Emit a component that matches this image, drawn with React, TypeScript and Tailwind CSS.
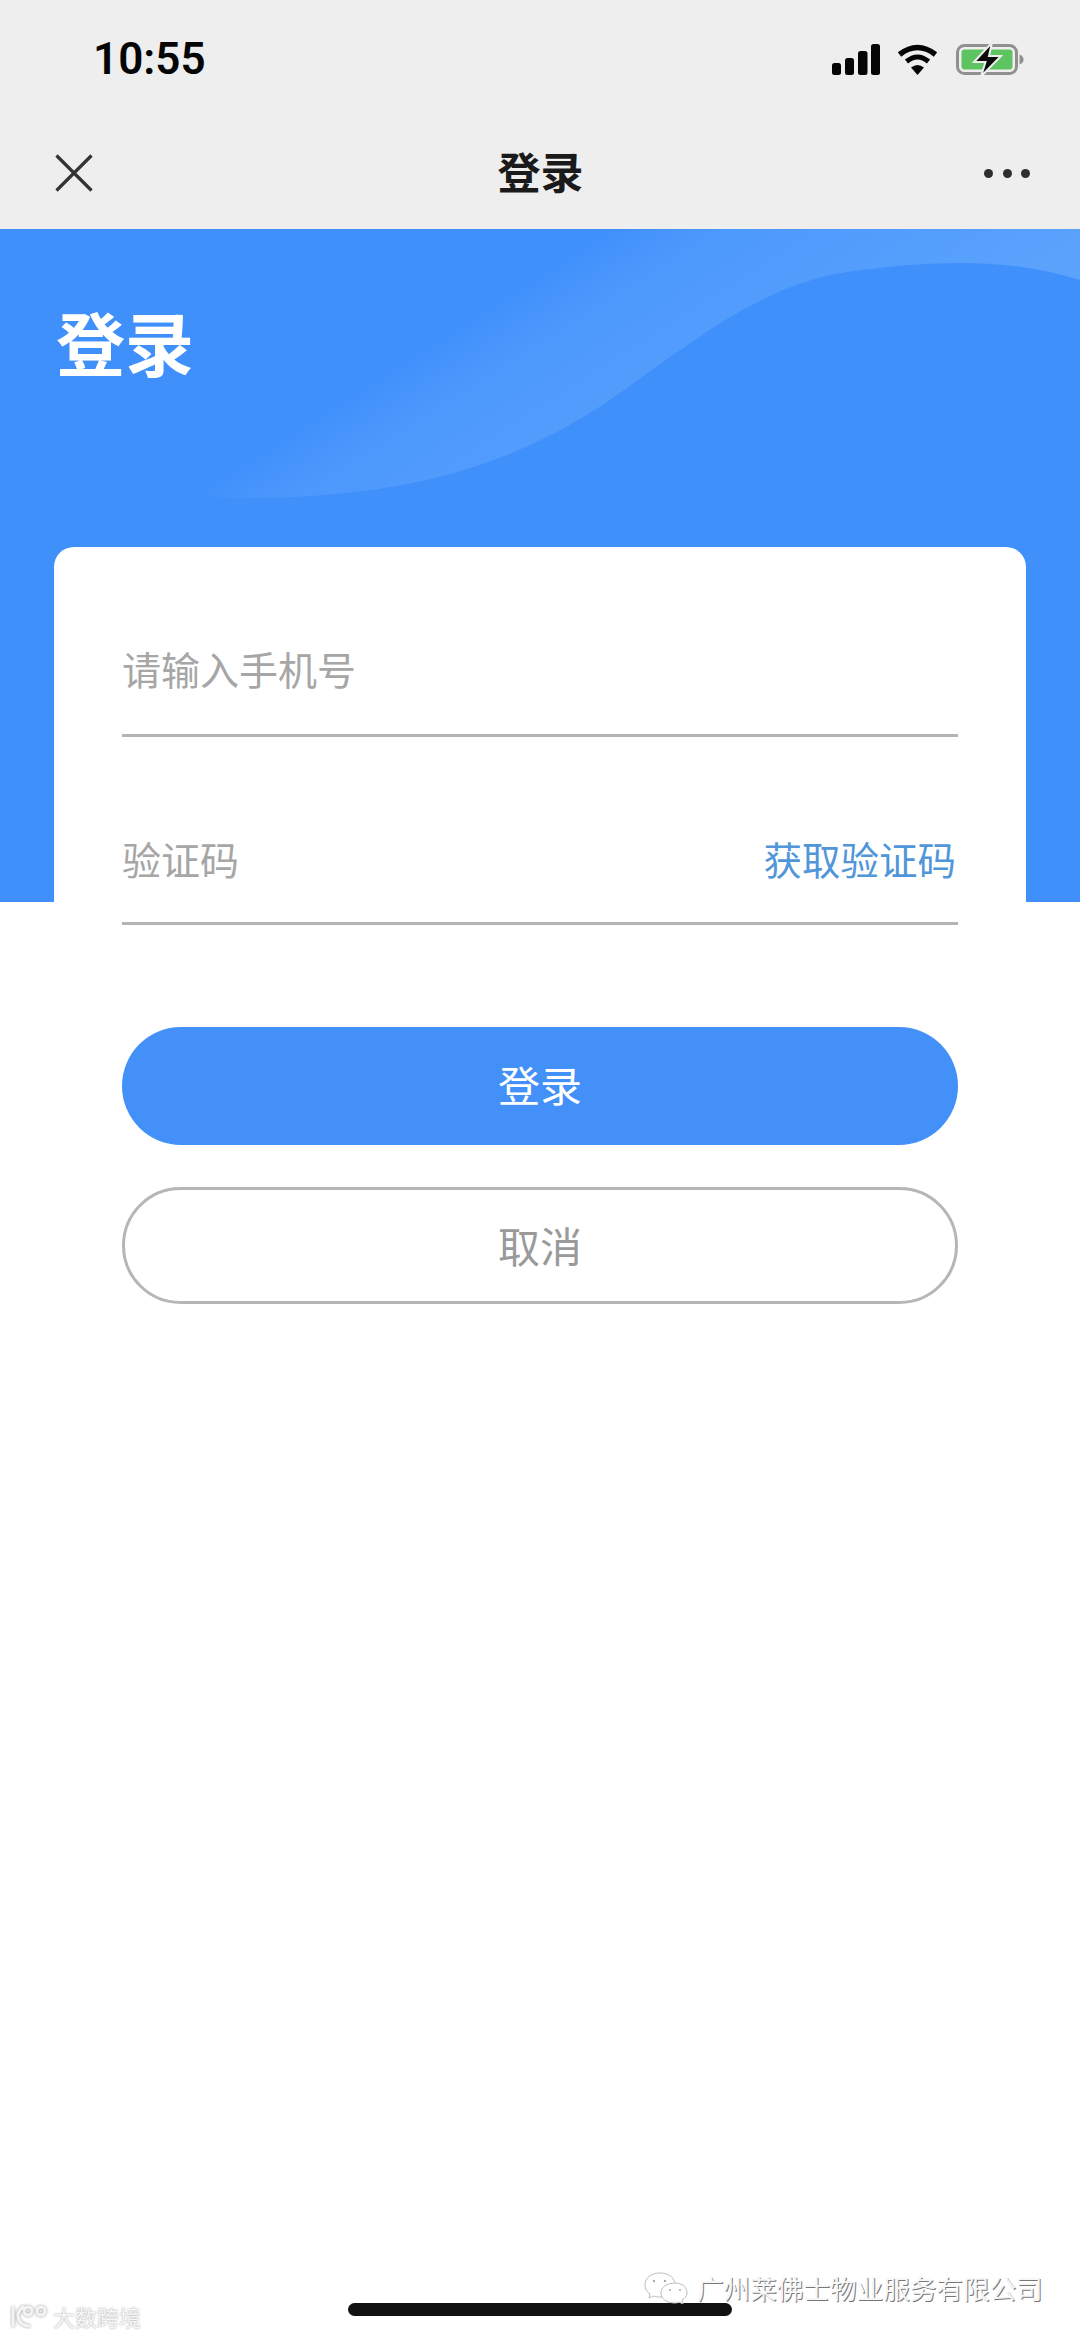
import React from "react";

const cjk = "font-['Noto_Sans_CJK_SC','Liberation_Sans',sans-serif]";

function Signal() {
  return (
    <svg width="48" height="31" viewBox="0 0 48 31" className="block" aria-hidden="true">
      <rect x="0" y="19" width="9" height="12" rx="2.5" fill="#050505" />
      <rect x="13" y="14" width="9" height="17" rx="2.5" fill="#050505" />
      <rect x="26" y="7" width="9.5" height="24" rx="2.5" fill="#050505" />
      <rect x="39" y="0" width="9" height="31" rx="2.5" fill="#050505" />
    </svg>
  );
}

function Wifi() {
  return (
    <svg width="41" height="31" viewBox="0 0 41 31" className="block" aria-hidden="true">
      <path d="M2.5 10.5Q20.5 -3.5 38.500 10.500" fill="none" stroke="#050505" strokeWidth="5.500" />
      <path d="M9.500 17.500Q20.500 8.500 31.500 17.500" fill="none" stroke="#050505" strokeWidth="5" />
      <path d="M14 23.500Q20.500 18.500 27 23.500L20.500 31Z" fill="#050505" />
    </svg>
  );
}

function Battery() {
  return (
    <svg width="68" height="31" viewBox="0 0 68 31" className="block overflow-visible" aria-hidden="true">
      <rect x="1.500" y="1.500" width="59" height="28" rx="7" fill="none" stroke="#909090" strokeWidth="3" />
      <rect x="5.500" y="5.500" width="51" height="20" rx="3" fill="#5ec462" />
      <path d="M63.500 10.500C66.500 11.500 67.500 13.500 67.500 15.500C67.500 17.500 66.500 19.500 63.500 20.500Z" fill="#909090" />
      <path d="M36 -1.500L18 18H29.500L25 32.500L45 12H33Z" fill="#0a0a0a" stroke="#eeeeee" strokeWidth="2" />
    </svg>
  );
}

function CloseIcon() {
  return (
    <svg width="38" height="38" viewBox="0 0 38 38" className="block -translate-y-[1px]" aria-hidden="true">
      <path d="M1.500 1.500L36.500 36.500M36.500 1.500L1.500 36.500" stroke="#333333" strokeWidth="3.200" fill="none" />
    </svg>
  );
}

function Wave() {
  return (
    <svg
      className="absolute inset-0 block"
      width="1080"
      height="673"
      viewBox="0 0 1080 673"
      aria-hidden="true"
    >
      <defs>
        <linearGradient id="waveFill" gradientUnits="userSpaceOnUse" x1="207" y1="258" x2="345" y2="475">
          <stop offset="0" stopColor="#5aa2fc" stopOpacity="0" />
          <stop offset="0.2" stopColor="#5aa2fc" stopOpacity="0.45" />
          <stop offset="1" stopColor="#5aa2fc" stopOpacity="1" />
        </linearGradient>
      </defs>
      <path
        d="M0 268H207C400 275 520 235 620 164C700 107 770 50 861 41C930 32 1010 28 1080 51V0H0Z"
        fill="url(#waveFill)"
      />
    </svg>
  );
}

function WeChatMark() {
  return (
    <svg width="44" height="32" viewBox="0 0 44 32" className="block" aria-hidden="true">
      <g fill="#ffffff" stroke="#bdbdbd" strokeWidth="1">
        <path d="M16 1C7 1 1 6 1 13C1 17 3 20 6 22L5 26L10 24C12 25 14 25 16 25C26 25 31 19 31 13C31 6 25 1 16 1Z" />
        <path d="M31 11C23 11 17 15 17 21C17 27 23 31 31 31C32 31 33 31 35 30L39 32L38 28C41 26 43 24 43 21C43 15 38 11 31 11Z" />
      </g>
      <g fill="#a8a8a8">
        <circle cx="10" cy="9" r="1.200" />
        <circle cx="21" cy="9" r="1.200" />
        <circle cx="26" cy="18" r="1" />
        <circle cx="36" cy="18" r="1" />
      </g>
    </svg>
  );
}

function DataMark() {
  return (
    <svg width="40" height="26" viewBox="0 0 40 26" className="block" aria-hidden="true">
      <g fill="none" stroke="#f4f4f4" strokeWidth="3" style={{ filter: "drop-shadow(0 0 1.500px #9a9a9a)" }}>
        <path d="M3 4V24" />
        <path d="M14 3C8 8 7 11 8 14C9 20 14 23 20 23" />
        <circle cx="18" cy="8" r="4" />
        <circle cx="31" cy="8" r="4" />
      </g>
    </svg>
  );
}

export default function App() {
  return (
    <div className={`relative h-[2337px] w-[1080px] overflow-hidden bg-white ${cjk}`}>
      <header className="flex h-[229px] flex-col bg-[#eeeeee]">
        <div className="flex h-[118px] items-center justify-between pl-[93px] pr-[56px]">
          <span className="font-['Roboto',sans-serif] text-[44px] leading-none font-semibold text-[#050505]">
            10:55
          </span>
          <div className="flex items-center">
            <Signal />
            <div className="ml-[17px]">
              <Wifi />
            </div>
            <div className="ml-[18px]">
              <Battery />
            </div>
          </div>
        </div>
        <nav className="grid h-[111px] grid-cols-[1fr_auto_1fr] items-center pl-[55px] pr-[50px]">
          <CloseIcon />
          <span className="-translate-x-[2px] -translate-y-[3px] text-[43px] leading-none font-bold text-[#1a1a1a]">
            登录
          </span>
          <div className="flex items-center justify-end gap-[9.500px]">
            <span className="h-[9px] w-[9px] rounded-full bg-[#2e2e2e]" />
            <span className="h-[9px] w-[9px] rounded-full bg-[#2e2e2e]" />
            <span className="h-[9px] w-[9px] rounded-full bg-[#2e2e2e]" />
          </div>
        </nav>
      </header>

      <section className="relative h-[673px] overflow-hidden bg-[#4090fc]">
        <Wave />
        <h1 className="relative pl-[56px] pt-[78px] text-[69px] leading-[69px] font-bold text-white">登录</h1>
      </section>

      <main className="relative mx-[54px] -mt-[355px] rounded-[20px] bg-white px-[68px]">
        <div className="flex h-[190px] items-end border-b-[3px] border-[#b4b4b4] pb-[43px]">
          <span className="text-[39px] leading-[46px] text-[#a6a6a6]">请输入手机号</span>
        </div>
        <div className="flex h-[188px] items-end justify-between border-b-[3px] border-[#b4b4b4] pb-[41px] pr-[2px]">
          <span className="text-[39px] leading-[46px] text-[#a6a6a6]">验证码</span>
          <span className="text-[38.500px] leading-[46px] text-[#5096d8]">获取验证码</span>
        </div>
        <button className="mt-[102px] flex h-[118px] w-full items-center justify-center rounded-full bg-[#4290f8] pb-[5px] text-[42px] leading-none text-white">
          登录
        </button>
        <button className="mt-[42px] flex h-[117px] w-full items-center justify-center rounded-full border-[3px] border-[#b6b6b6] bg-white pb-[2px] text-[42px] leading-none text-[#9a9a9a]">
          取消
        </button>
      </main>

      <div className="absolute bottom-[21px] left-[348px] h-[13px] w-[384px] rounded-full bg-[#111111]" />

      <div className="absolute left-[644px] top-[2272px] flex items-center">
        <WeChatMark />
        <span className="ml-[9px] text-[26.600px] leading-[30px] whitespace-nowrap text-[#f7f7f7] [text-shadow:1px_1px_0_#777777]">
          广州莱佛士物业服务有限公司
        </span>
      </div>

      <div className="absolute left-[10px] top-[2303px] flex items-center">
        <DataMark />
        <span className="ml-[3px] text-[22px] leading-[26px] whitespace-nowrap text-[#f6f6f6] [text-shadow:0_0_2px_#9a9a9a]">
          大数跨境
        </span>
      </div>
    </div>
  );
}
